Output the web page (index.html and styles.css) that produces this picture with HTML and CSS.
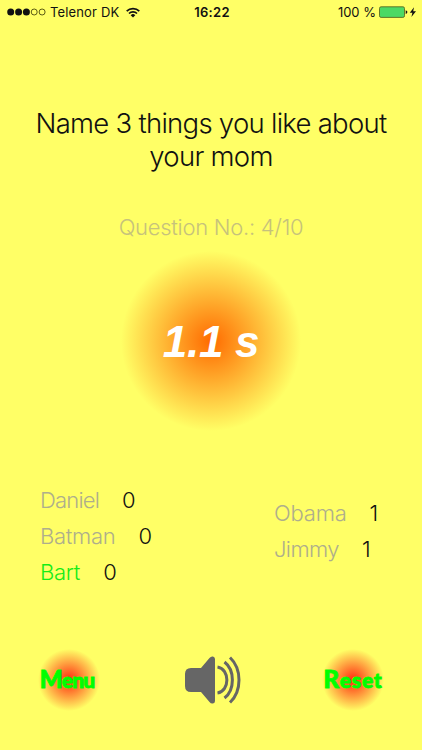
FILE: index.html
```html
<!DOCTYPE html>
<html lang="en">
<head>
<meta charset="utf-8">
<title>Party quiz</title>
<link rel="stylesheet" href="styles.css">
</head>
<body>
<header class="status">
  <div class="carrier">
    <svg class="signal" width="40" height="8" viewBox="0 0 40 8"><g fill="#111"><circle cx="3.7" cy="4" r="3.5"/><circle cx="11.6" cy="4" r="3.5"/><circle cx="19.4" cy="4" r="3.5"/></g><g fill="none" stroke="#333300" stroke-width=".8"><circle cx="27.2" cy="4" r="3"/><circle cx="35.1" cy="4" r="3"/></g></svg>
    <span class="network">Telenor DK</span>
    <svg class="wifi" width="14" height="11" viewBox="0 0 14 11"><g fill="none" stroke="#111" stroke-width="1.7"><path d="M.7 4.1A9 9 0 0 1 13.3 4.1"/><path d="M3 6.5A5.7 5.7 0 0 1 11 6.5"/></g><path d="M4.7 8.2A3.3 3.3 0 0 1 9.3 8.2L7 10.6Z" fill="#111"/></svg>
  </div>
  <time class="clock">16:22</time>
  <div class="power">
    <span class="percent">100 %</span>
    <svg width="38" height="12" viewBox="0 0 38 12"><rect x=".5" y=".8" width="25" height="10.6" rx="1.6" fill="#4cd964" stroke="#5c6b20" stroke-width=".9"/><path d="M26.7 4.2Q28.4 4.6 28.4 6.1T26.7 8Z" fill="#111"/><path d="M35 1.2L30.8 6.7H33.4L32.4 10.9L37 5.3H34.2Z" fill="#111"/></svg>
  </div>
</header>
<main>
  <h1 class="question">Name 3 things you like about<br>your mom</h1>
  <p class="progress">Question No.: 4/10</p>
  <div class="timer"><span>1.1 s</span></div>
  <section class="teams">
    <ul class="team">
      <li><span class="name daniel">Daniel</span><span>0</span></li>
      <li><span class="name batman">Batman</span><span>0</span></li>
      <li><span class="name active">Bart</span><span>0</span></li>
    </ul>
    <ul class="team right">
      <li><span class="name obama">Obama</span><span>1</span></li>
      <li><span class="name jimmy">Jimmy</span><span>1</span></li>
    </ul>
  </section>
</main>
<footer class="actions">
  <button class="glow menu"><span>Menu</span></button>
  <svg class="speaker" width="58" height="50" viewBox="0 0 58 50"><path d="M7 13H17L25.5 3Q27 1 29 1.5Q31 2 31 4V46Q31 48 29 48.5Q27 49 25.5 47L17 37H7Q1 37 1 31V19Q1 13 7 13Z" fill="#666"/><g fill="none" stroke="#666" stroke-width="3"><path d="M33.5 12C46 14 46 36 33.5 38"/><path d="M40.5 7C51 15 51 35 40.5 43"/><path d="M46 2.5C58 14 58 36 46 47.5"/></g></svg>
  <button class="glow reset"><span>Reset</span></button>
</footer>
</body>
</html>
```
FILE: styles.css
```css
* { box-sizing: border-box; }
body {
  margin: 0;
  width: 422px;
  height: 750px;
  overflow: hidden;
  background: #ffff66;
  color: #111;
  font-family: Inter, "Liberation Sans", sans-serif;
  font-weight: 300;
}
.status {
  display: grid;
  grid-template-columns: 1fr auto 1fr;
  height: 24px;
  padding: 0 5px 0 7px;
  align-items: center;
  font-size: 13px;
  font-weight: 400;
  line-height: 24px;
}
.carrier, .power { display: flex; align-items: center; }
.network { margin: 0 7px 0 3px; letter-spacing: .15px; }
.clock { font-weight: 600; letter-spacing: .3px; }
.power { justify-content: flex-end; gap: 3px; }
.question {
  margin: 83px 0 0;
  text-align: center;
  font-size: 27.5px;
  font-weight: 300;
  line-height: 33px;
  letter-spacing: -.73px;
  white-space: nowrap;
}
.progress {
  margin: 40px 0 0;
  text-align: center;
  color: #c6c27c;
  font-size: 22px;
  line-height: 28px;
  letter-spacing: -.28px;
}
.timer {
  width: 180px;
  height: 180px;
  margin: 10px auto 0;
  padding-top: 1px;
  display: grid;
  place-items: center;
  border-radius: 50%;
  background: radial-gradient(circle closest-side, #ff6a00, #ffff66);
  color: #fff;
  font: italic bold 44px/52px "Liberation Sans", Arial, sans-serif;
  letter-spacing: -.3px;
}
.teams {
  display: flex;
  justify-content: space-between;
  align-items: flex-start;
  margin-top: 51px;
  padding: 0 41px 0 40px;
}
.team { list-style: none; margin: 0; padding: 0; font-size: 22px; line-height: 36px; }
.team li { display: flex; gap: 23px; }
.team.right { width: 107px; margin-top: 13px; }
.name { color: #aeae8c; }
.daniel { letter-spacing: -.8px; }
.batman { letter-spacing: -.3px; }
.obama { letter-spacing: -.2px; }
.jimmy { letter-spacing: -.6px; }
.name.active { color: #16ed16; letter-spacing: -.25px; }
.actions {
  display: flex;
  justify-content: space-between;
  align-items: center;
  margin-top: 59px;
  padding: 0 38px;
}
.speaker { margin-left: 4px; }
.glow {
  width: 62px;
  height: 62px;
  padding: 0;
  border: 0;
  border-radius: 50%;
  background: radial-gradient(circle closest-side, #ff2a10, #ffff66);
  color: #0f0;
  font: 900 21px/24px Lato, sans-serif;
  -webkit-text-stroke: .9px #0f0;
}
.glow span { display: block; }
.glow span::first-letter { font-size: 24px; }
.menu span { margin: -2px 4px 0 0; letter-spacing: -.9px; }
.reset span { margin-top: -2px; letter-spacing: .8px; }
```
